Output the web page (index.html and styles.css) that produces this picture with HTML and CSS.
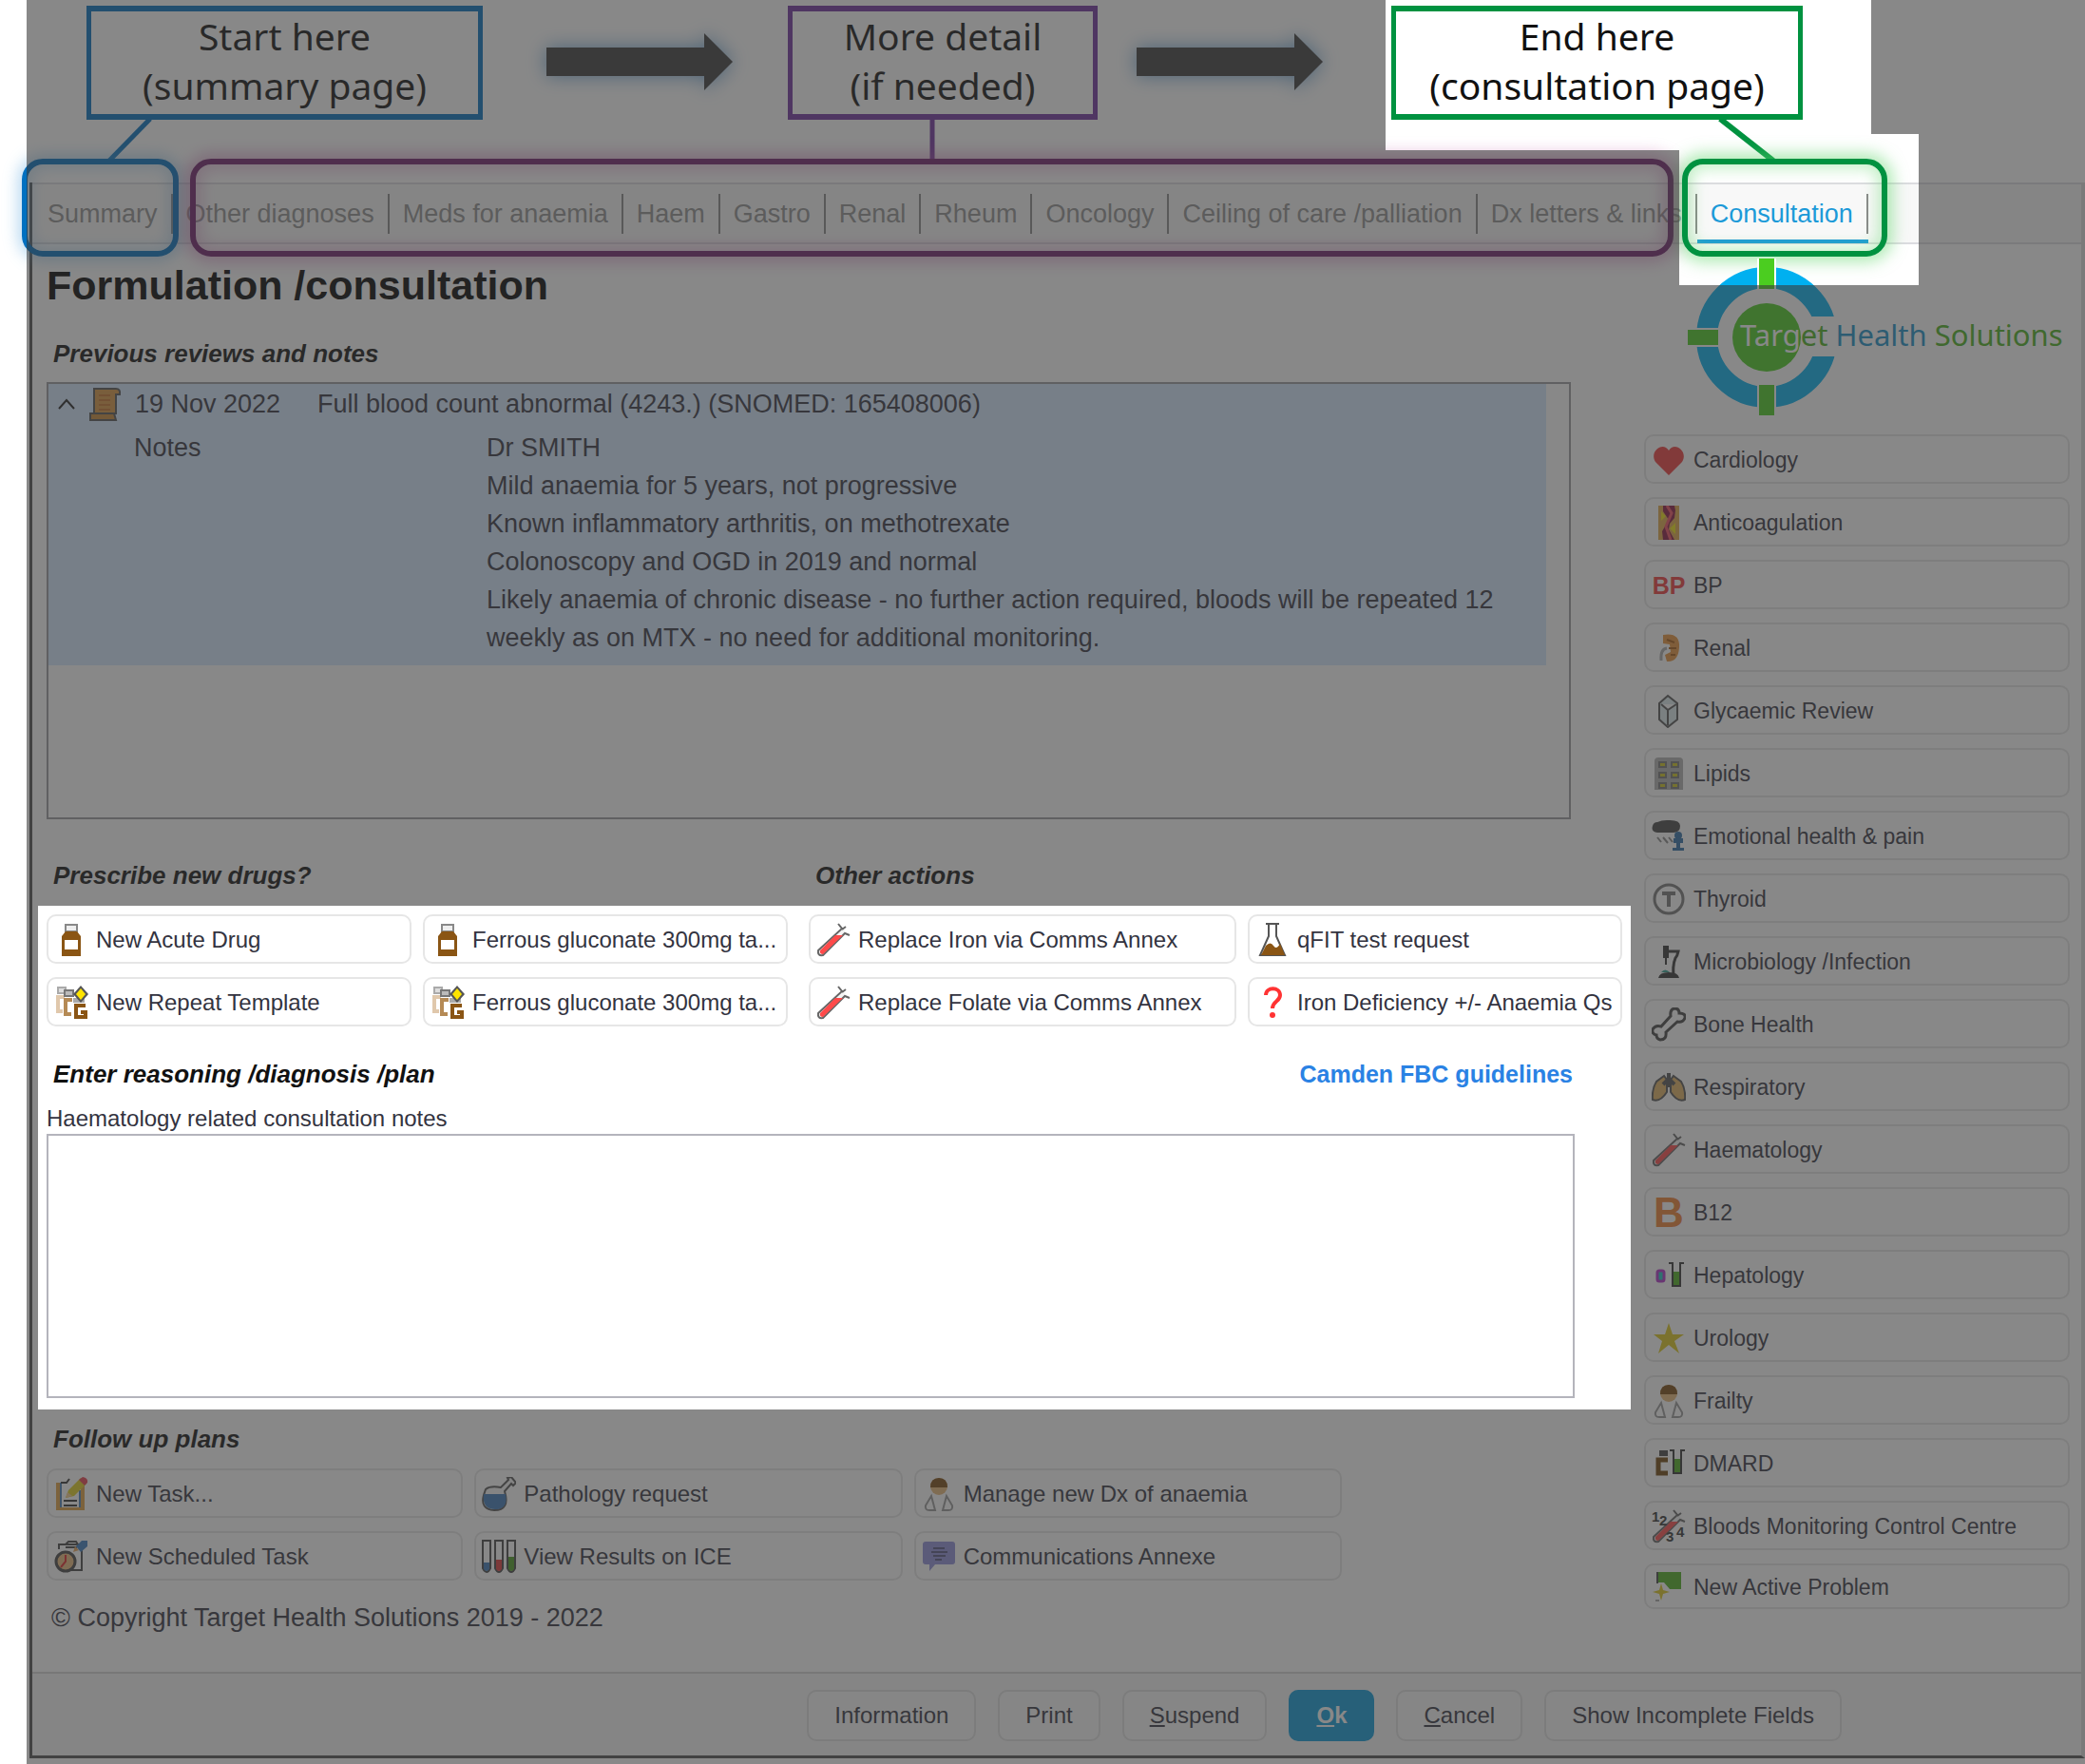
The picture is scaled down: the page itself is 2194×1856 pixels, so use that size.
FILE: index.html
```html
<!DOCTYPE html>
<html lang="en">
<head>
<meta charset="utf-8">
<meta name="viewport" content="width=device-width, initial-scale=1">
<title>Formulation /consultation</title>
<link rel="stylesheet" href="styles.css">
</head>
<body>
<svg class="sprite" aria-hidden="true">
  <symbol id="arrow" viewBox="0 0 196 60"><path d="M0 15H166V0L196 30 166 60V45H0z" fill="#3a3a3a"/></symbol>
  <symbol id="bottle" viewBox="0 0 36 36"><path d="M12 2h12v7H12z" fill="#eee" stroke="#888" stroke-width="2"/><path d="M12 9h12l4 5v21H8V14z" fill="#8a5514"/><path d="M11 18h14v10H11z" fill="#fff"/></symbol>
  <symbol id="repeat" viewBox="0 0 36 36"><path d="M4 2h8v6H4z" fill="#ddd" stroke="#aaa" stroke-width="2"/><path d="M11 12H4v15h5" fill="none" stroke="#e0c8ac" stroke-width="4"/><path d="M11 5h9v6h-9z" fill="#bbb" stroke="#777" stroke-width="2"/><path d="M19 15h-7v15h6" fill="none" stroke="#b58a55" stroke-width="4"/><path d="M20 13h12v5H20z" fill="#aaa"/><path d="M33 21H23v12h10v-5h-5" fill="none" stroke="#8a5514" stroke-width="4"/><path d="M28 0l8 9-8 9-8-9z" fill="#555"/><path d="M28 3l5 6-5 6-5-6z" fill="#ffe400"/></symbol>
  <symbol id="tube" viewBox="0 0 36 36"><path d="M23 1l4 5L2 29q-1 6 5 5L30 11l5 2M27 7l4-3" fill="#f4f4f4" stroke="#666" stroke-width="2"/><path d="M20 13h8L7 33q-4 0-3-4z" fill="#ff4a4a"/></symbol>
  <symbol id="flask" viewBox="0 0 36 36"><path d="M11 1h14M14 1v13L5 34h26L22 14V1" fill="#fff" stroke="#555" stroke-width="2"/><path d="M11 24q5-5 8 0t7-2l5 12H6z" fill="#8a5514"/></symbol>
  <symbol id="question" viewBox="0 0 36 36"><path d="M11 10c0-9 15-9 15 0 0 7-8 6-8 14" fill="none" stroke="#f33" stroke-width="4"/><circle cx="18" cy="31" r="3" fill="#f33"/></symbol>
  <symbol id="scroll" viewBox="0 0 36 36"><path d="M7 2h23q5 0 4 6h-4v20H7z" fill="#d9953f" stroke="#555" stroke-width="2"/><path d="M3 28h25l2 7H3z" fill="#c98836" stroke="#555" stroke-width="2"/><path d="M12 9h12M12 14h12M12 19h12M12 24h12" stroke="#c8742c" stroke-width="2"/></symbol>
  <symbol id="task" viewBox="0 0 36 36"><path d="M2 6h30v29H2z" fill="#e0a040"/><path d="M6 6h22v26H6z" fill="#fff"/><path d="M7 6v26M27 14v18" stroke="#4a80b8" stroke-width="2"/><path d="M7 6h6l3-4M10 25h14M10 30h14" fill="none" stroke="#333" stroke-width="2"/><path d="M12 22l3-8L28 1l6 6-13 13z" fill="#e0d020"/><path d="M12 22l2-6 5 4z" fill="#f4cc90"/><path d="M26 3l4-3q6 1 5 6l-3 3z" fill="#e84050"/></symbol>
  <symbol id="schedule" viewBox="0 0 36 36"><path d="M5 10V5h24v27H18M12 5l3-3h8l2 3M12 8h12" fill="#fff" stroke="#444" stroke-width="2"/><path d="M20 13l2-6 4 4z" fill="#e9a55a"/><path d="M23 7l6-6h6v6l-7 6z" fill="#3c7cc0"/><circle cx="12" cy="23" r="10" fill="#e9b87a" stroke="#444" stroke-width="3"/><path d="M12 16v7l-5 6" fill="none" stroke="#e02828" stroke-width="2"/></symbol>
  <symbol id="retort" viewBox="0 0 36 36"><path d="M4 13Q9 9 20 11L28 3l-1-2 4-1 5 6-3 3-2-2-7 8q6 20-11 20Q-2 34 2 19z" fill="#f4f4f4" stroke="#555" stroke-width="2"/><path d="M2 18h23q3 16-11 16T2 18z" fill="#3a78b8"/></symbol>
  <symbol id="results" viewBox="0 0 36 36"><g fill="#fff" stroke="#444" stroke-width="2"><path d="M1 1h8v29q-4 8-8 0zM14 1h8v29q-4 8-8 0zM27 1h8v29q-4 8-8 0z"/></g><path d="M2 24h6v7q-3 4-6 0z" fill="#3a78b8"/><path d="M15 21h6v10q-3 4-6 0z" fill="#e03838"/><path d="M28 18h6v13q-3 4-6 0z" fill="#4a9a20"/></symbol>
  <symbol id="person" viewBox="0 0 36 36"><circle cx="18" cy="10" r="9" fill="#e9b878"/><path d="M9 11q0-10 9-10t9 10z" fill="#7a4a10"/><path d="M10 20l4 15H8Q3 35 4 30zM26 20l-4 15h6q5 0 4-5z" fill="#fff" stroke="#999" stroke-width="2"/></symbol>
  <symbol id="chat" viewBox="0 0 36 36"><path d="M4 2h28q3 0 3 3v18q0 3-3 3H14l-6 7v-7H4q-3 0-3-3V5q0-3 3-3z" fill="#8f8fd8"/><path d="M12 9h12M10 13h17M12 17h13M14 21h7" stroke="#555580" stroke-width="2"/></symbol>
  <symbol id="heart" viewBox="0 0 36 36"><path d="M18 34L4 20C-3 9 12-2 18 8 24-2 39 9 32 20z" fill="#f03c3c"/></symbol>
  <symbol id="vessel" viewBox="0 0 36 36"><path d="M7 0h22v36H7z" fill="#e0a848"/><path d="M10 6l5 5-5 5zM25 18v12l-6-6z" fill="#f0e010"/><path d="M12 0h12l1 5-1 8-5 6-1 6 6 11H12l-1-9 7-12-6-9z" fill="#8a1640"/><path d="M16 0l5 8-6 14 5 14" fill="none" stroke="#f05060" stroke-width="3"/></symbol>
  <symbol id="kidney" viewBox="0 0 36 36"><path d="M12 4q18-3 17 13T16 32l-2-7 6-3-1-8-7-1z" fill="#e8943a"/><path d="M16 9l8 3M18 18h8M20 25h5" stroke="#a85c14" stroke-width="2"/><path d="M16 18q-7 1-6 13" fill="none" stroke="#aaa" stroke-width="3"/></symbol>
  <symbol id="crystal" viewBox="0 0 36 36"><path d="M17 2l10 8v17l-10 8-9-8V10zM10 11l7 6 9-6M17 17v16" fill="#dcebee" stroke="#555" stroke-width="2"/></symbol>
  <symbol id="pills" viewBox="0 0 36 36"><path d="M3 35V5q0-4 4-4h22q4 0 4 4v30z" fill="#b0b0b0"/><g fill="#d0c420" stroke="#777" stroke-width="2"><path d="M8 6h7v5H8zM21 6h7v5h-7zM8 17h7v5H8zM21 17h7v5h-7zM8 28h7v5H8zM21 28h7v5h-7z"/></g></symbol>
  <symbol id="cloud" viewBox="0 0 36 36"><path d="M6 3Q10 1 16 1q14-1 14 6 0 7-7 7H6Q-1 13 1 7q1-4 5-4z" fill="#444"/><path d="M6 19l4 5M12 19l5 6M18 19l4 5" stroke="#888" stroke-width="2"/><circle cx="28" cy="17" r="4" fill="#2e6ea8"/><path d="M23 20h10v5h-3v5h4v3H22v-3h4v-5h-3z" fill="#2e6ea8"/></symbol>
  <symbol id="thyroid" viewBox="0 0 36 36"><circle cx="18" cy="18" r="15" fill="none" stroke="#777" stroke-width="3"/><path d="M11 12h14M18 12v14" stroke="#777" stroke-width="4"/></symbol>
  <symbol id="microscope" viewBox="0 0 36 36"><path d="M12 1h6v13h-6zM14 14h2v7h-2z" fill="#333"/><path d="M18 7h10q-1 5-3 7-3 7-2 17" fill="none" stroke="#333" stroke-width="3"/><path d="M7 35q1-6 11-6t11 6z" fill="#333"/><path d="M10 29q4-5 9 0z" fill="#30a090"/></symbol>
  <symbol id="bone" viewBox="0 0 36 36"><path d="M20 9q-1-7 4-8 5 0 5 5 7 0 6 5-2 5-8 4L15 26q1 8-6 8-4-1-4-5-5-1-4-6 3-5 9-3z" fill="none" stroke="#444" stroke-width="3"/></symbol>
  <symbol id="lungs" viewBox="0 0 36 36"><path d="M13 6L5 12Q0 20 1 31q8 3 15-8V10zM23 6l8 6q5 8 4 19-8 3-15-8V10z" fill="#e0b060" stroke="#555" stroke-width="2"/><path d="M18 3v15M12 15l6-6 6 6" fill="none" stroke="#555" stroke-width="4"/></symbol>
  <symbol id="liver" viewBox="0 0 36 36"><rect x="6" y="13" width="7" height="11" rx="2" fill="#20c8c0" stroke="#b030c8" stroke-width="3"/><path d="M18 5h4v24h8V5h4" fill="none" stroke="#333" stroke-width="2"/><path d="M23 14h6v14h-6z" fill="#4cae1c"/></symbol>
  <symbol id="star" viewBox="0 0 36 36"><path d="M18 2l4 12h12l-10 7 5 13-11-9-11 9 4-13L2 14h12z" fill="#ddc81c"/></symbol>
  <symbol id="dmard" viewBox="0 0 36 36"><path d="M8 4h9v6H8z" fill="#444"/><path d="M17 14H7v14h10" fill="none" stroke="#6f450c" stroke-width="5"/><path d="M19 4h4v24h8V4h4" fill="none" stroke="#333" stroke-width="2"/><path d="M24 13h6v14h-6z" fill="#4cae1c"/></symbol>
  <symbol id="flag" viewBox="0 0 36 36"><path d="M5 2h2v12H5z" fill="#444"/><path d="M7 2h24v18H19l-6-7H7z" fill="#4cae1c"/><path d="M10 14l2 7 7 2-7 2-2 7-2-7-7-2 7-2z" fill="#ddc81c"/><path d="M4 32h4" stroke="#555"/></symbol>
</svg>

<div class="page">
  <div class="guide">
    <p class="callout callout-start">Start here<br>(summary page)</p>
    <svg class="guide-arrow" aria-hidden="true"><use href="#arrow"/></svg>
    <p class="callout callout-detail">More detail<br>(if needed)</p>
    <svg class="guide-arrow" aria-hidden="true"><use href="#arrow"/></svg>
    <p class="callout callout-end">End here<br>(consultation page)</p>
  </div>

  <div class="window">
    <nav class="tabs" aria-label="Sections">
      <div class="tab-group group-start">
        <a class="tab" href="#summary">Summary</a>
        <svg class="link-line line-start" viewBox="0 0 50 44" aria-hidden="true"><path d="M46 0L3 44" stroke="#0070c0" stroke-width="5"/></svg>
      </div>
      <div class="tab-group group-detail">
        <a class="tab" href="#other">Other diagnoses</a>
        <a class="tab" href="#meds">Meds for anaemia</a>
        <a class="tab" href="#haem">Haem</a>
        <a class="tab" href="#gastro">Gastro</a>
        <a class="tab" href="#renal">Renal</a>
        <a class="tab" href="#rheum">Rheum</a>
        <a class="tab" href="#oncology">Oncology</a>
        <a class="tab" href="#ceiling">Ceiling of care /palliation</a>
        <a class="tab" href="#letters">Dx letters &amp; links</a>
        <svg class="link-line line-detail" viewBox="0 0 50 44" aria-hidden="true"><path d="M25 0V44" stroke="#7030a0" stroke-width="5"/></svg>
      </div>
      <div class="tab-group group-end">
        <a class="tab tab-active" href="#consultation" aria-current="page">Consultation</a>
        <svg class="link-line line-end" viewBox="0 0 60 44" aria-hidden="true"><path d="M2 0L58 44" stroke="#009240" stroke-width="6"/></svg>
      </div>
    </nav>

    <div class="body">
      <main class="main">
        <section class="block">
          <h1 class="title">Formulation /consultation</h1>
          <h2 class="subhead previous">Previous reviews and notes</h2>
          <div class="reviews">
            <article class="review">
              <div class="review-head">
                <button class="collapse" type="button" aria-label="Collapse review"><svg viewBox="0 0 20 12" aria-hidden="true"><path d="M2 11l8-9 8 9" fill="none" stroke="#222" stroke-width="2"/></svg></button>
                <svg class="icon" aria-hidden="true"><use href="#scroll"/></svg>
                <span class="review-date">19 Nov 2022</span>
                <span>Full blood count abnormal (4243.) (SNOMED: 165408006)</span>
              </div>
              <div class="review-notes">
                <span class="notes-label">Notes</span>
                <p class="notes-text">Dr SMITH<br>Mild anaemia for 5 years, not progressive<br>Known inflammatory arthritis, on methotrexate<br>Colonoscopy and OGD in 2019 and normal<br>Likely anaemia of chronic disease - no further action required, bloods will be repeated 12 weekly as on MTX - no need for additional monitoring.</p>
              </div>
            </article>
          </div>
          <div class="split heads">
            <h2 class="subhead">Prescribe new drugs?</h2>
            <h2 class="subhead">Other actions</h2>
          </div>
        </section>

        <section class="block spotlight">
          <div class="split">
            <div class="drugs">
              <button class="action" type="button"><svg class="icon" aria-hidden="true"><use href="#bottle"/></svg>New Acute Drug</button>
              <button class="action" type="button"><svg class="icon" aria-hidden="true"><use href="#bottle"/></svg>Ferrous gluconate 300mg ta...</button>
              <button class="action" type="button"><svg class="icon" aria-hidden="true"><use href="#repeat"/></svg>New Repeat Template</button>
              <button class="action" type="button"><svg class="icon" aria-hidden="true"><use href="#repeat"/></svg>Ferrous gluconate 300mg ta...</button>
            </div>
            <div class="others">
              <button class="action" type="button"><svg class="icon" aria-hidden="true"><use href="#tube"/></svg>Replace Iron via Comms Annex</button>
              <button class="action" type="button"><svg class="icon" aria-hidden="true"><use href="#flask"/></svg>qFIT test request</button>
              <button class="action" type="button"><svg class="icon" aria-hidden="true"><use href="#tube"/></svg>Replace Folate via Comms Annex</button>
              <button class="action" type="button"><svg class="icon" aria-hidden="true"><use href="#question"/></svg>Iron Deficiency +/- Anaemia Qs</button>
            </div>
          </div>
          <div class="reason-head">
            <h2 class="subhead">Enter reasoning /diagnosis /plan</h2>
            <a class="guideline" href="#guidelines">Camden FBC guidelines</a>
          </div>
          <label class="field-label" for="notes">Haematology related consultation notes</label>
          <textarea class="field" id="notes"></textarea>
        </section>

        <section class="block">
          <h2 class="subhead follow">Follow up plans</h2>
          <div class="follow-grid">
            <button class="action" type="button"><svg class="icon" aria-hidden="true"><use href="#task"/></svg>New Task...</button>
            <button class="action" type="button"><svg class="icon" aria-hidden="true"><use href="#retort"/></svg>Pathology request</button>
            <button class="action" type="button"><svg class="icon" aria-hidden="true"><use href="#person"/></svg>Manage new Dx of anaemia</button>
            <button class="action" type="button"><svg class="icon" aria-hidden="true"><use href="#schedule"/></svg>New Scheduled Task</button>
            <button class="action" type="button"><svg class="icon" aria-hidden="true"><use href="#results"/></svg>View Results on ICE</button>
            <button class="action" type="button"><svg class="icon" aria-hidden="true"><use href="#chat"/></svg>Communications Annexe</button>
          </div>
          <p class="copyright">© Copyright Target Health Solutions 2019 - 2022</p>
        </section>
      </main>

      <aside class="sidebar">
        <svg class="logo" viewBox="0 0 402 165" role="img" aria-label="Target Health Solutions">
          <circle cx="83" cy="83" r="63" fill="none" stroke="#00b0f0" stroke-width="22"/>
          <path d="M73 0h20v165H73zM0 73h50v20H0zM130 61h40v42h-40z" fill="#fff"/>
          <circle cx="83" cy="83" r="36" fill="#4bcd20"/>
          <path d="M75 0h16v32H75zM75 133h16v32H75zM0 75h32v16H0z" fill="#4bcd20"/>
          <text class="logo-text" x="55" y="92"><tspan fill="#fff">Targ</tspan><tspan fill="#4bb020">et</tspan><tspan fill="#1a90c8"> Health</tspan><tspan fill="#4bb020"> Solutions</tspan></text>
        </svg>
        <div class="topics">
          <button class="action" type="button"><svg class="icon" aria-hidden="true"><use href="#heart"/></svg>Cardiology</button>
          <button class="action" type="button"><svg class="icon" aria-hidden="true"><use href="#vessel"/></svg>Anticoagulation</button>
          <button class="action" type="button"><span class="icon icon-bp" aria-hidden="true">BP</span>BP</button>
          <button class="action" type="button"><svg class="icon" aria-hidden="true"><use href="#kidney"/></svg>Renal</button>
          <button class="action" type="button"><svg class="icon" aria-hidden="true"><use href="#crystal"/></svg>Glycaemic Review</button>
          <button class="action" type="button"><svg class="icon" aria-hidden="true"><use href="#pills"/></svg>Lipids</button>
          <button class="action" type="button"><svg class="icon" aria-hidden="true"><use href="#cloud"/></svg>Emotional health &amp; pain</button>
          <button class="action" type="button"><svg class="icon" aria-hidden="true"><use href="#thyroid"/></svg>Thyroid</button>
          <button class="action" type="button"><svg class="icon" aria-hidden="true"><use href="#microscope"/></svg>Microbiology /Infection</button>
          <button class="action" type="button"><svg class="icon" aria-hidden="true"><use href="#bone"/></svg>Bone Health</button>
          <button class="action" type="button"><svg class="icon" aria-hidden="true"><use href="#lungs"/></svg>Respiratory</button>
          <button class="action" type="button"><svg class="icon" aria-hidden="true"><use href="#tube"/></svg>Haematology</button>
          <button class="action" type="button"><span class="icon icon-b" aria-hidden="true">B</span>B12</button>
          <button class="action" type="button"><svg class="icon" aria-hidden="true"><use href="#liver"/></svg>Hepatology</button>
          <button class="action" type="button"><svg class="icon" aria-hidden="true"><use href="#star"/></svg>Urology</button>
          <button class="action" type="button"><svg class="icon" aria-hidden="true"><use href="#person"/></svg>Frailty</button>
          <button class="action" type="button"><svg class="icon" aria-hidden="true"><use href="#dmard"/></svg>DMARD</button>
          <button class="action" type="button"><svg class="icon" viewBox="0 0 36 36" aria-hidden="true"><use href="#tube"/><g class="count-text"><text x="0" y="13">1</text><text x="8" y="17">2</text><text x="15" y="34">3</text><text x="26" y="29">4</text></g></svg>Bloods Monitoring Control Centre</button>
          <button class="action action-short" type="button"><svg class="icon" aria-hidden="true"><use href="#flag"/></svg>New Active Problem</button>
        </div>
      </aside>
    </div>

    <footer class="footer">
      <button class="command" type="button">Information</button>
      <button class="command" type="button">Print</button>
      <button class="command" type="button"><u>S</u>uspend</button>
      <button class="command command-ok" type="button"><u>O</u>k</button>
      <button class="command" type="button"><u>C</u>ancel</button>
      <button class="command" type="button">Show Incomplete Fields</button>
    </footer>
  </div>
  <div class="veil" aria-hidden="true"></div>
</div>
</body>
</html>
```
FILE: styles.css
```css
* { box-sizing: border-box; }

body {
  margin: 0;
  background: #fff;
  color: #333340;
  font-family: "Liberation Sans", Arial, sans-serif;
  font-size: 24px;
}

h1, h2, p { margin: 0; }

button { font: inherit; color: inherit; cursor: pointer; }

.sprite { display: none; }

.page {
  position: relative;
  min-height: 100vh;
  padding: 6px 0 4px 31px;
  overflow: hidden;
}

/* Walkthrough row above the window */
.guide {
  display: flex;
  align-items: flex-start;
  height: 186px;
  padding-left: 60px;
}

.callout {
  flex: none;
  padding: 0 0 4px;
  border: solid;
  border-width: 6px 5px;
  background: #fff;
  color: #111;
  font-family: "Noto Sans", sans-serif;
  font-size: 39px;
  line-height: 52px;
  text-align: center;
}

.callout-start { width: 417px; border-color: #0070c0; }
.callout-detail { width: 326px; border-color: #7030a0; }
.callout-end { width: 433px; border-color: #009240; }

.guide-arrow {
  flex: none;
  width: 196px;
  height: 60px;
  margin: 29px 72px 0 67px;
  overflow: visible;
  filter: drop-shadow(0 0 10px rgba(70, 140, 200, .8));
}

.callout-start + .guide-arrow { margin-right: 58px; }
.callout-detail + .guide-arrow { margin-left: 41px; }

/* Window */
.window {
  border: solid #505050;
  border-width: 0 4px 3px 3px;
  border-right-color: #dcdcdc;
}

.tabs {
  display: flex;
  height: 65px;
  padding-left: 2px;
  border: solid #dcdce0;
  border-width: 2px 0;
  background: #f8f8f8;
}

.tab-group {
  position: relative;
  display: flex;
  align-items: center;
}

.tab {
  padding: 0 14px;
  border-right: 2px solid #8a8a8a;
  color: #909090;
  font-size: 27px;
  line-height: 42px;
  text-decoration: none;
  white-space: nowrap;
}

.tab-active { color: #1c9ad8; }

.tab-active::before {
  content: "";
  position: absolute;
  right: 0;
  bottom: -1px;
  left: 0;
  height: 4px;
  background: #1c9ad8;
}

/* Rounded marker round each group of tabs */
.tab-group::after {
  content: "";
  position: absolute;
  top: -27px;
  bottom: -15px;
  border: 6px solid;
  border-radius: 22px;
  pointer-events: none;
}

.group-start::after {
  right: -6px;
  left: -13px;
  border-color: #0070c0;
  box-shadow: 0 0 16px 4px rgba(80, 160, 220, .4), inset 0 0 16px 4px rgba(80, 160, 220, .3);
}

.group-detail::after {
  right: 25px;
  left: 18px;
  border-color: #701e6b;
  box-shadow: 0 0 16px 6px rgba(190, 80, 160, .4), inset 0 0 16px 6px rgba(190, 80, 160, .3);
}

.group-end::after {
  right: -20px;
  left: -16px;
  border-color: #009240;
  box-shadow: 0 0 16px 6px rgba(100, 215, 110, .5), inset 0 0 16px 4px rgba(100, 215, 110, .4);
}

.link-line {
  position: absolute;
  bottom: 86px;
  width: 50px;
  height: 44px;
}

.line-start { left: 76px; }
.line-detail { left: 774px; }
.line-end { left: 22px; width: 60px; }

.body {
  display: grid;
  grid-template-columns: minmax(0, 1fr) 460px;
  gap: 14px;
  padding-bottom: 41px;
}

.main { padding-left: 6px; }

.block { padding: 0 9px; }

.title {
  margin-top: 17px;
  color: #000;
  font-size: 43px;
  line-height: 52px;
}

.subhead {
  padding-left: 7px;
  color: #111;
  font-size: 26px;
  font-style: italic;
  line-height: 32px;
}

.previous { margin: 30px 0 14px; }

.reviews {
  height: 460px;
  margin-right: 54px;
  padding-right: 24px;
  border: 2px solid #9a9aa0;
  overflow: auto;
  font-size: 27px;
}

.review {
  height: 296px;
  background: #d4e8ff;
}

.review-head {
  display: flex;
  align-items: center;
  height: 42px;
}

.collapse {
  width: 20px;
  margin: 0 12px 0 9px;
  padding: 0;
  border: 0;
  background: none;
}

.collapse svg { display: block; width: 20px; height: 12px; }

.review-date { width: 192px; margin-left: 14px; }

.review-notes {
  display: flex;
  margin-top: 5px;
  padding-left: 90px;
  line-height: 40px;
}

.notes-label { flex: none; width: 371px; }

.split {
  display: grid;
  grid-template-columns: 780fr 856fr;
  gap: 22px;
}

.heads { margin: 43px 0 16px; }

/* Entry area stays bright above the veil */
.spotlight {
  position: relative;
  z-index: 2;
  padding: 9px 9px 12px;
  background: #fff;
}

.drugs, .others, .follow-grid {
  display: grid;
  gap: 14px 12px;
}

.drugs { grid-template-columns: 1fr 1fr; }
.others { grid-template-columns: 450fr 394fr; }
.follow-grid { grid-template-columns: 438fr 450fr 450fr; max-width: 1363px; }

.action {
  display: flex;
  align-items: center;
  gap: 8px;
  min-width: 0;
  height: 52px;
  padding: 2px 0 0 6px;
  border: 2px solid #e6e6e6;
  border-radius: 10px;
  background: #fff;
  text-align: left;
  white-space: nowrap;
}

.action-short { height: 48px; }

.icon { flex: none; width: 36px; height: 36px; overflow: visible; }

.reason-head {
  display: flex;
  justify-content: space-between;
  margin: 34px 52px 17px 0;
}

.guideline {
  color: #2a82e4;
  font-size: 25px;
  font-weight: bold;
  line-height: 32px;
  text-decoration: none;
}

.field-label { display: block; line-height: 28px; }

.field {
  display: block;
  width: calc(100% - 50px);
  height: 278px;
  margin-top: 2px;
  border: 2px solid #b4b4bc;
  background: #fff;
  font: inherit;
  resize: none;
}

.follow { margin: 15px 0; }

.copyright {
  margin-top: 23px;
  padding-left: 5px;
  font-size: 27px;
  line-height: 32px;
}

/* Sidebar */
.sidebar { padding: 15px 12px 0 0; }

.logo {
  position: relative;
  display: block;
  width: 402px;
  height: 165px;
  margin: 0 0 20px 46px;
}

.logo-text {
  font-family: "Noto Sans", sans-serif;
  font-size: 31px;
  white-space: pre;
}

.topics {
  display: flex;
  flex-direction: column;
  gap: 14px;
  font-size: 23px;
}

.icon-bp, .icon-b {
  color: #f03c3c;
  font-size: 25px;
  font-weight: bold;
  line-height: 36px;
  text-align: center;
}

.icon-b { color: #f08030; font-size: 44px; }

.count-text { fill: #333; font-size: 15px; font-weight: bold; }

/* Command bar */
.footer {
  display: flex;
  justify-content: flex-end;
  gap: 23px;
  padding: 17px 252px 15px 0;
  border-top: 2px solid #d4d4d4;
  background: #f8f8f8;
}

.command {
  height: 54px;
  padding: 0 27px;
  border: 2px solid #e0e0e0;
  border-radius: 10px;
  background: #fafafa;
}

.command-ok {
  border-color: #0c9ad8;
  background: #0c9ad8;
  color: #fff;
  font-weight: bold;
}

/* Dimming layer, cut away round the final callout and its tab */
.veil {
  position: absolute;
  z-index: 1;
  inset: 0 0 0 28px;
  background: rgba(58, 58, 58, .604);
  clip-path: polygon(0 0, 1430px 0, 1430px 158px, 1739px 158px, 1739px 300px, 1991px 300px, 1991px 141px, 1941px 141px, 1941px 0, 100% 0, 100% 100%, 0 100%);
  pointer-events: none;
}
```
